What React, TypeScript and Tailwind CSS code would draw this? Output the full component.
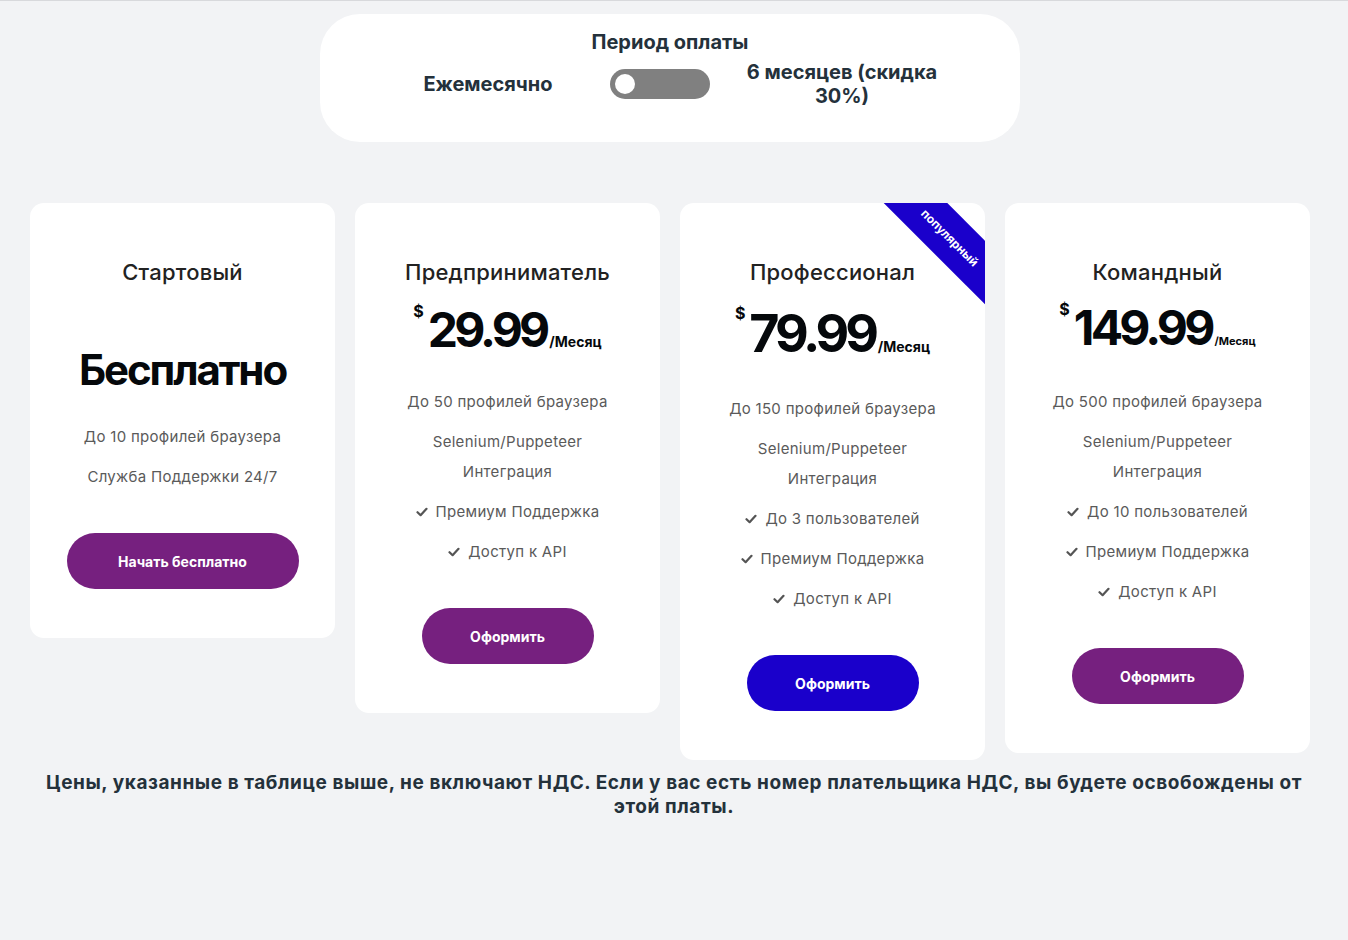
import React from 'react'

type Plan = {
  title: string
  price?: string
  free?: boolean
  priceSize: string
  priceMt: string
  perSize: string
  areaH: string
  features: { text: React.ReactNode; check?: boolean }[]
  button: string
  buttonW: string
  buttonColor: string
  popular?: boolean
}

const plans: Plan[] = [
  {
    title: 'Стартовый',
    free: true,
    priceSize: '',
    priceMt: '',
    perSize: '',
    areaH: 'h-[136px]',
    features: [{ text: 'До 10 профилей браузера' }, { text: 'Служба Поддержки 24/7' }],
    button: 'Начать бесплатно',
    buttonW: 'w-[232px]',
    buttonColor: 'bg-[#76207f]',
  },
  {
    title: 'Предприниматель',
    price: '29.99',
    priceSize: 'text-[48px]',
    priceMt: 'mt-[20px]',
    perSize: 'text-[14px]',
    areaH: 'h-[101px]',
    features: [
      { text: 'До 50 профилей браузера' },
      { text: <>Selenium/Puppeteer<br />Интеграция</> },
      { text: 'Премиум Поддержка', check: true },
      { text: 'Доступ к API', check: true },
    ],
    button: 'Оформить',
    buttonW: 'w-[172px]',
    buttonColor: 'bg-[#76207f]',
  },
  {
    title: 'Профессионал',
    price: '79.99',
    priceSize: 'text-[52px]',
    priceMt: 'mt-[22px]',
    perSize: 'text-[14px]',
    areaH: 'h-[108px]',
    features: [
      { text: 'До 150 профилей браузера' },
      { text: <>Selenium/Puppeteer<br />Интеграция</> },
      { text: 'До 3 пользователей', check: true },
      { text: 'Премиум Поддержка', check: true },
      { text: 'Доступ к API', check: true },
    ],
    button: 'Оформить',
    buttonW: 'w-[172px]',
    buttonColor: 'bg-[#1a00cb]',
    popular: true,
  },
  {
    title: 'Командный',
    price: '149.99',
    priceSize: 'text-[48px]',
    priceMt: 'mt-[18px]',
    perSize: 'text-[11px]',
    areaH: 'h-[101px]',
    features: [
      { text: 'До 500 профилей браузера' },
      { text: <>Selenium/Puppeteer<br />Интеграция</> },
      { text: 'До 10 пользователей', check: true },
      { text: 'Премиум Поддержка', check: true },
      { text: 'Доступ к API', check: true },
    ],
    button: 'Оформить',
    buttonW: 'w-[172px]',
    buttonColor: 'bg-[#76207f]',
  },
]

function CheckMark() {
  return (
    <svg width="12" height="10" viewBox="0 0 12 10" className="shrink-0">
      <path d="M1.5 5.2 L4.6 8.2 L10.5 1.8" fill="none" stroke="#555" strokeWidth="2.2" strokeLinecap="round" strokeLinejoin="round" />
    </svg>
  )
}

function PlanCard({ plan }: { plan: Plan }) {
  return (
    <div className="relative w-[305px] shrink-0 overflow-hidden rounded-[14px] bg-white pt-[55px] pb-[49px] flex flex-col items-center">
      {plan.popular && (
        <div className="absolute left-[170px] top-[12px] w-[200px] h-[45px] rotate-45 bg-[#1a00cb] flex items-center justify-center">
          <span className="text-[12px] font-bold text-white">популярный</span>
        </div>
      )}

      <h3 className="text-[22px] leading-7 font-medium tracking-[0.01em] text-[#222]">{plan.title}</h3>

      <div className={`${plan.areaH} flex justify-center`}>
        {plan.free ? (
          <div className="mt-[63px] text-[42px] leading-none font-bold tracking-[-0.05em] text-[#05080b]">Бесплатно</div>
        ) : (
          <div className={`${plan.priceMt} flex items-baseline h-fit`}>
            <span className="self-start text-[16px] leading-none font-bold text-[#05080b] mr-[4px] -mt-[3px]">$</span>
            <span className={`${plan.priceSize} leading-none font-bold tracking-[-0.08em] text-[#05080b]`}>{plan.price}</span>
            <span className={`${plan.perSize} leading-none font-bold text-[#05080b] ml-[3px]`}>/Месяц</span>
          </div>
        )}
      </div>

      <ul className="flex flex-col items-center gap-[10px] text-[15px] leading-[30px] tracking-[0.02em] text-[#5a5a5a] text-center">
        {plan.features.map((f, i) => (
          <li key={i} className="flex items-center gap-[8px]">
            {f.check && <CheckMark />}
            <span>{f.text}</span>
          </li>
        ))}
      </ul>

      <button className={`${plan.buttonW} ${plan.buttonColor} mt-[41px] h-[56px] rounded-full text-[14px] font-bold text-white`}>
        {plan.button}
      </button>
    </div>
  )
}

export default function App() {
  return (
    <div className="min-h-[940px] bg-[#f2f3f5] border-t border-[#d8d9dc] font-['Inter',sans-serif]">
      {/* Billing period switch */}
      <div className="ml-[320px] mt-[13px] w-[700px] rounded-[40px] bg-white pt-[16px] pb-[34px] flex flex-col items-center text-[#24313b]">
        <h2 className="text-[20px] leading-6 font-bold">Период оплаты</h2>
        <div className="mt-[6px] flex items-center gap-[32px]">
          <div className="w-[180px] text-center text-[20px] leading-6 font-bold">Ежемесячно</div>
          <button className="w-[100px] h-[30px] rounded-full bg-[#808080] flex items-center px-[5px]">
            <span className="w-[20px] h-[20px] rounded-full bg-white" />
          </button>
          <div className="w-[200px] text-center text-[20px] leading-6 font-bold">6 месяцев (скидка 30%)</div>
        </div>
      </div>

      {/* Plans */}
      <div className="mt-[61px] pl-[30px] flex items-start gap-[20px]">
        {plans.map((p) => (
          <PlanCard key={p.title} plan={p} />
        ))}
      </div>

      <p className="mt-[11px] px-[36px] text-center text-[19px] leading-6 font-bold tracking-[0.03em] text-[#24313b]">
        Цены, указанные в таблице выше, не включают НДС. Если у вас есть номер плательщика НДС, вы будете освобождены от этой платы.
      </p>
    </div>
  )
}
